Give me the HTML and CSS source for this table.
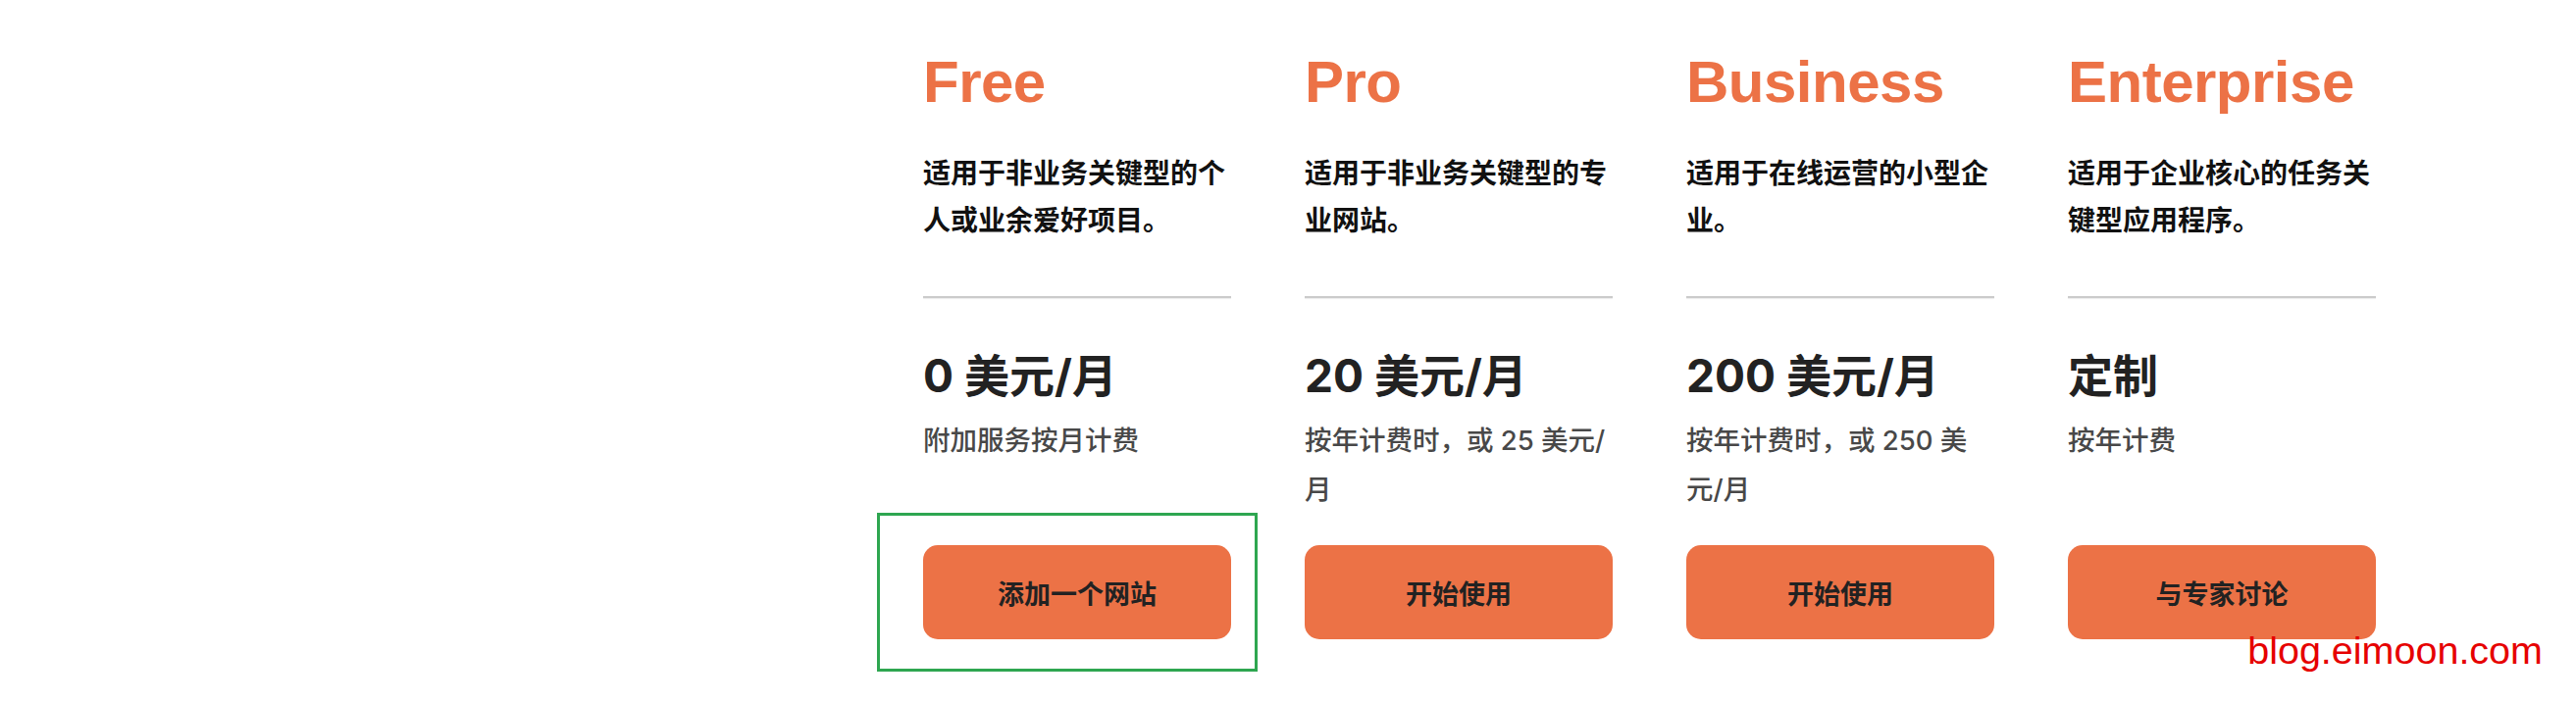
FILE: index.html
```html
<!DOCTYPE html>
<html lang="zh-CN">
<head>
<meta charset="utf-8">
<title>Pricing</title>
<link rel="stylesheet" href="styles.css">
</head>
<body>
<main class="page">
  <section class="plans">
    <article class="plan">
      <h2 class="plan-name">Free</h2>
      <p class="plan-desc">适用于非业务关键型的个人或业余爱好项目。</p>
      <hr class="divider">
      <div class="price">0 美元/月</div>
      <p class="price-note">附加服务按月计费</p>
      <div class="cta-wrap">
        <a class="cta" href="#">添加一个网站</a>
        <span class="highlight"></span>
      </div>
    </article>
    <article class="plan">
      <h2 class="plan-name">Pro</h2>
      <p class="plan-desc">适用于非业务关键型的专业网站。</p>
      <hr class="divider">
      <div class="price">20 美元/月</div>
      <p class="price-note">按年计费时，或 25 美元/月</p>
      <div class="cta-wrap">
        <a class="cta" href="#">开始使用</a>
      </div>
    </article>
    <article class="plan">
      <h2 class="plan-name">Business</h2>
      <p class="plan-desc">适用于在线运营的小型企业。</p>
      <hr class="divider">
      <div class="price">200 美元/月</div>
      <p class="price-note">按年计费时，或 250 美元/月</p>
      <div class="cta-wrap">
        <a class="cta" href="#">开始使用</a>
      </div>
    </article>
    <article class="plan">
      <h2 class="plan-name">Enterprise</h2>
      <p class="plan-desc">适用于企业核心的任务关键型应用程序。</p>
      <hr class="divider">
      <div class="price">定制</div>
      <p class="price-note">按年计费</p>
      <div class="cta-wrap">
        <a class="cta" href="#">与专家讨论</a>
      </div>
    </article>
  </section>
  <div class="watermark">blog.eimoon.com</div>
</main>
</body>
</html>
```

FILE: styles.css
```css
html, body {
  margin: 0;
  padding: 0;
  background: #ffffff;
}

body {
  font-family: "Liberation Sans", "Noto Sans CJK SC", sans-serif;
  width: 2626px;
  height: 716px;
  overflow: hidden;
}

.page {
  position: relative;
  width: 2626px;
  height: 716px;
  box-sizing: border-box;
  padding: 48px 0 0 941px;
}

.plans {
  display: flex;
  gap: 75px;
  align-items: stretch;
}

.plan {
  width: 314px;
  display: flex;
  flex-direction: column;
}

.plan-name {
  margin: 0;
  font-family: "Liberation Sans", sans-serif;
  font-weight: 700;
  font-size: 60px;
  line-height: 72px;
  letter-spacing: -0.5px;
  color: #ec7246;
}

.plan-desc {
  margin: 34px 0 0;
  font-size: 28px;
  line-height: 48px;
  font-weight: 600;
  color: #111111;
}

.divider {
  margin: 52px 0 0;
  border: 0;
  height: 2px;
  background: #cbcbcb;
  box-shadow: 0 1px 1px rgba(0, 0, 0, 0.08);
}

.price {
  margin-top: 49px;
  font-family: "Inter", "Noto Sans CJK SC", sans-serif;
  font-size: 46px;
  line-height: 60px;
  font-weight: 700;
  color: #222222;
}

.price-note {
  margin: 11px 0 0;
  font-family: "Inter", "Noto Sans CJK SC", sans-serif;
  font-size: 27.5px;
  line-height: 50px;
  font-weight: 500;
  color: #484848;
}

.cta-wrap {
  position: relative;
  margin-top: auto;
  padding-top: 32px;
}

.cta {
  display: flex;
  align-items: center;
  justify-content: center;
  height: 96px;
  border-radius: 15px;
  background: #ec7246;
  color: #222222;
  text-decoration: none;
  font-size: 27px;
  font-weight: 600;
}

.highlight {
  position: absolute;
  left: -47px;
  right: -27px;
  top: -1px;
  bottom: -33px;
  border: 3px solid #2ea650;
  pointer-events: none;
}

.watermark {
  position: absolute;
  right: 34px;
  top: 644px;
  font-family: "Liberation Sans", sans-serif;
  font-size: 39.5px;
  line-height: 39.5px;
  color: #e60000;
}
```
